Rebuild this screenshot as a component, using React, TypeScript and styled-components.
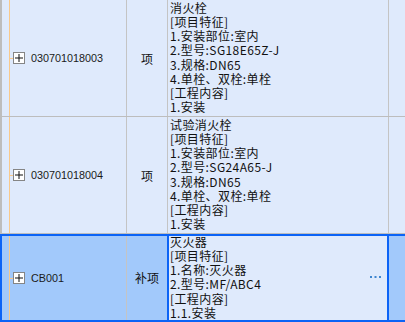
import React from "react";
import styled, { createGlobalStyle } from "styled-components";

const GlobalStyle = createGlobalStyle`
  html, body {
    margin: 0;
    padding: 0;
    background: #dfeafc;
    overflow: hidden;
  }
  body {
    font-family: "Noto Sans CJK SC", "Liberation Sans", sans-serif;
    font-size: 12px;
    color: #111;
  }
`;

const Grid = styled.div`
  width: 405px;
  height: 322px;
  overflow: hidden;
`;

const Row = styled.div<{ $selected?: boolean }>`
  position: relative;
  display: grid;
  grid-template-columns: 125px 40px 222px 1fr;
  box-sizing: border-box;
  background: ${({ $selected }) => ($selected ? "#a2c9fb" : "#dfeafc")};
  border-left: 2px solid #bdbdbd;
  border-bottom: 1px solid #bdbdbd;

  /* selection frame drawn over the row */
  &::after {
    content: "";
    display: ${({ $selected }) => ($selected ? "block" : "none")};
    position: absolute;
    top: 0;
    left: -2px;
    right: 0;
    bottom: 0;
    border: 2px solid #0b63f6;
    border-right: none;
    pointer-events: none;
  }
`;

const CodeCell = styled.div`
  display: flex;
  align-items: center;
  border-right: 1px solid #c4c4c4;
`;

const Guide = styled.span`
  position: relative;
  align-self: stretch;
  width: 11px;
  flex: none;

  &::before {
    content: "";
    position: absolute;
    left: 7px;
    top: 0;
    bottom: 0;
    width: 1px;
    background: #f8c98c;
  }
  &::after {
    content: "";
    position: absolute;
    left: 7px;
    right: 0;
    top: 50%;
    height: 1px;
    background: #f8c98c;
  }
`;

const ExpandBox = styled.span`
  box-sizing: border-box;
  width: 12px;
  height: 12px;
  flex: none;
  border: 1px solid #858585;
  background: #ffffff;
  display: flex;
  align-items: center;
  justify-content: center;
`;

const Code = styled.span`
  margin-left: 6px;
  font-family: "Liberation Sans", Arial, sans-serif;
  font-size: 10.8px;
  color: #1a1a1a;
`;

const UnitCell = styled.div`
  display: flex;
  align-items: center;
  justify-content: center;
  font-size: 12px;
`;

const DescCell = styled.div<{ $focused?: boolean }>`
  position: relative;
  display: flex;
  box-sizing: border-box;
  padding: 0.5px 0 1.5px 2px;
  background: #dfeafc;
  border-left: 1px solid #c4c4c4;
  border-right: 1px solid #c4c4c4;

  /* focus frame of the active cell */
  &::after {
    content: "";
    display: ${({ $focused }) => ($focused ? "block" : "none")};
    position: absolute;
    top: 0;
    bottom: 0;
    left: -1px;
    right: -1px;
    border-left: 2px solid #0b63f6;
    border-right: 2px solid #0b63f6;
    pointer-events: none;
  }
`;

const Lines = styled.div`
  flex: 1;
  line-height: 14.25px;
  letter-spacing: 0.4px;
  white-space: nowrap;
`;

const Line = styled.div``;

const More = styled.span`
  align-self: center;
  margin-right: 7px;
  display: flex;
`;

const TailCell = styled.div``;

type Item = {
  code: string;
  unit: string;
  lines: string[];
  selected?: boolean;
};

const items: Item[] = [
  {
    code: "030701018003",
    unit: "项",
    lines: [
      "消火栓",
      "[项目特征]",
      "1.安装部位:室内",
      "2.型号:SG18E65Z-J",
      "3.规格:DN65",
      "4.单栓、双栓:单栓",
      "[工程内容]",
      "1.安装",
    ],
  },
  {
    code: "030701018004",
    unit: "项",
    lines: [
      "试验消火栓",
      "[项目特征]",
      "1.安装部位:室内",
      "2.型号:SG24A65-J",
      "3.规格:DN65",
      "4.单栓、双栓:单栓",
      "[工程内容]",
      "1.安装",
    ],
  },
  {
    code: "CB001",
    unit: "补项",
    selected: true,
    lines: [
      "灭火器",
      "[项目特征]",
      "1.名称:灭火器",
      "2.型号:MF/ABC4",
      "[工程内容]",
      "1.1.安装",
    ],
  },
];

function Plus() {
  return (
    <svg width="8" height="8" viewBox="0 0 8 8">
      <rect x="0" y="3.5" width="8" height="1" fill="#111" />
      <rect x="3.5" y="0" width="1" height="8" fill="#111" />
    </svg>
  );
}

function Dots() {
  return (
    <svg width="11" height="2" viewBox="0 0 11 2">
      <rect x="0" y="0" width="2" height="2" fill="#3f86cf" />
      <rect x="4.5" y="0" width="2" height="2" fill="#3f86cf" />
      <rect x="9" y="0" width="2" height="2" fill="#3f86cf" />
    </svg>
  );
}

export default function App() {
  return (
    <>
      <GlobalStyle />
      <Grid>
        {items.map((item) => (
          <Row key={item.code} $selected={item.selected}>
            <CodeCell>
              <Guide />
              <ExpandBox>
                <Plus />
              </ExpandBox>
              <Code>{item.code}</Code>
            </CodeCell>
            <UnitCell>{item.unit}</UnitCell>
            <DescCell $focused={item.selected}>
              <Lines>
                {item.lines.map((l, i) => (
                  <Line key={i}>{l}</Line>
                ))}
              </Lines>
              {item.selected && (
                <More>
                  <Dots />
                </More>
              )}
            </DescCell>
            <TailCell />
          </Row>
        ))}
      </Grid>
    </>
  );
}
